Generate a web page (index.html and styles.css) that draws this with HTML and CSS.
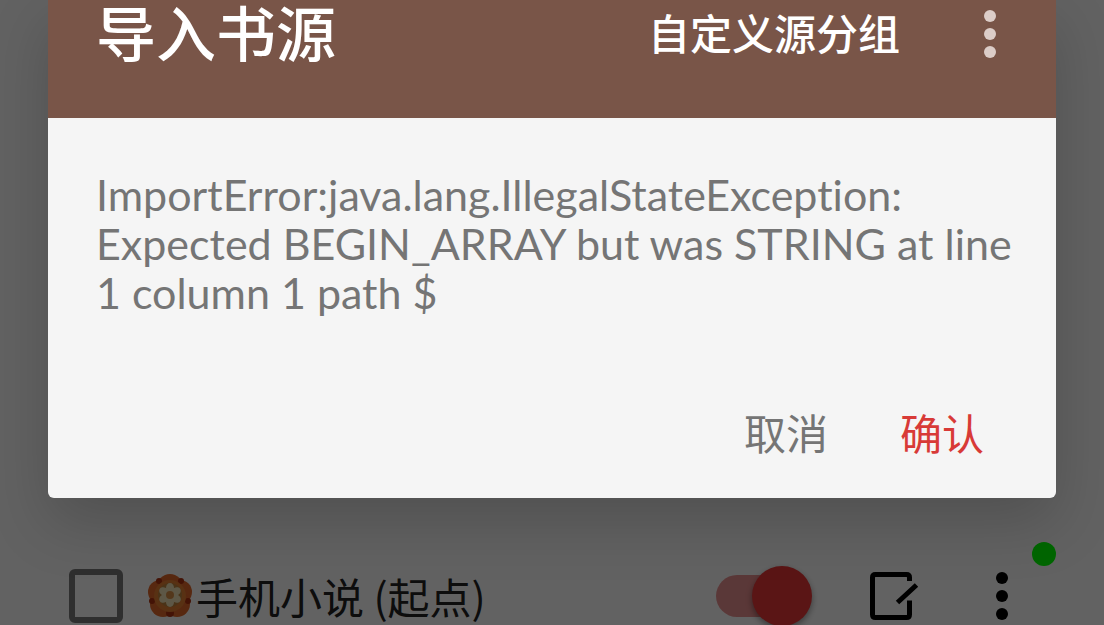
FILE: index.html
```html
<!DOCTYPE html>
<html lang="zh-CN">
<head>
<meta charset="utf-8">
<meta name="viewport" content="width=device-width, initial-scale=1">
<title>导入书源</title>
<link rel="stylesheet" href="styles.css">
</head>
<body>
<main class="page">
  <div class="source-row">
    <input class="check" type="checkbox" id="source">
    <label class="source-name" for="source">
      <svg class="flower" viewBox="0 0 46 46" aria-hidden="true">
        <g fill="#d9642a">
          <circle cx="23" cy="14" r="13"/><circle cx="33" cy="19" r="12"/><circle cx="30" cy="31" r="13"/><circle cx="16" cy="31" r="13"/><circle cx="13" cy="19" r="12"/>
        </g>
        <g fill="#a8300f">
          <circle cx="23" cy="40" r="4"/><circle cx="5" cy="28" r="3"/><circle cx="41" cy="28" r="3"/><circle cx="12" cy="8" r="3"/><circle cx="34" cy="8" r="3"/>
        </g>
        <circle cx="23" cy="23" r="16" fill="#dc7a30"/>
        <circle cx="23" cy="22" r="12" fill="#b8803c"/>
        <g fill="#e8d9b0">
          <ellipse cx="23" cy="15" rx="4" ry="5"/>
          <ellipse cx="23" cy="15" rx="4" ry="5" transform="rotate(60 23 22)"/>
          <ellipse cx="23" cy="15" rx="4" ry="5" transform="rotate(120 23 22)"/>
          <ellipse cx="23" cy="15" rx="4" ry="5" transform="rotate(180 23 22)"/>
          <ellipse cx="23" cy="15" rx="4" ry="5" transform="rotate(240 23 22)"/>
          <ellipse cx="23" cy="15" rx="4" ry="5" transform="rotate(300 23 22)"/>
        </g>
        <circle cx="23" cy="22" r="4" fill="#d08a45"/>
      </svg>
      <span>手机小说 (起点)</span>
    </label>
    <input class="switch" type="checkbox" role="switch" aria-label="启用" checked>
    <button class="icon-button edit" type="button" aria-label="编辑">
      <svg width="50" height="50" viewBox="0 0 50 50" fill="none" stroke="#000" stroke-width="5" aria-hidden="true">
        <path d="M40.500 10V6.500Q40.500 3.500 37.500 3.500H6.500Q3.500 3.500 3.500 6.500V43.500Q3.500 46.500 6.500 46.500H37.500Q40.500 46.500 40.500 43.500V29.500M28.500 31.500L47.500 14"/>
      </svg>
    </button>
    <button class="icon-button more" type="button" aria-label="更多">
      <svg width="12" height="48" viewBox="0 0 12 48" aria-hidden="true"><circle cx="6" cy="6" r="6"/><circle cx="6" cy="24" r="6"/><circle cx="6" cy="42" r="6"/></svg>
      <span class="status-dot"></span>
    </button>
  </div>
</main>
<div class="scrim">
  <section class="dialog" role="dialog" aria-modal="true" aria-labelledby="title">
    <header class="toolbar">
      <h1 class="title" id="title">导入书源</h1>
      <button class="group-button" type="button">自定义源分组</button>
      <button class="icon-button menu" type="button" aria-label="菜单">
        <svg width="12" height="48" viewBox="0 0 12 48" aria-hidden="true"><circle cx="6" cy="6" r="6"/><circle cx="6" cy="24" r="6"/><circle cx="6" cy="42" r="6"/></svg>
      </button>
    </header>
    <p class="message">ImportError:java.lang.IllegalStateException: Expected BEGIN_ARRAY but was STRING at line 1 column 1 path $</p>
    <footer class="actions">
      <button class="action" type="button">取消</button>
      <button class="action confirm" type="button">确认</button>
    </footer>
  </section>
</div>
</body>
</html>
```
FILE: styles.css
```css
* { box-sizing: border-box; }

body {
  margin: 0;
  overflow: hidden;
  background: #f5f5f5;
  font-family: Lato, "Noto Sans CJK SC", sans-serif;
  font-size: 42px;
}

button {
  padding: 0;
  border: 0;
  background: none;
  color: inherit;
  font: inherit;
}

.page {
  display: flex;
  flex-direction: column;
  justify-content: flex-end;
  height: 100vh;
}

.source-row {
  display: flex;
  align-items: center;
  height: 58px;
  padding: 0 84px 0 69px;
}

.check {
  appearance: none;
  flex: none;
  width: 54px;
  height: 54px;
  margin: 0 24px 0 0;
  border: 6px solid #757575;
  border-radius: 6px;
}

.source-name {
  display: flex;
  flex: 1;
  align-items: center;
  gap: 3px;
  color: #212121;
  line-height: 56px;
  white-space: nowrap;
  font-family: "Noto Sans CJK SC", sans-serif;
}

.flower {
  width: 46px;
  height: 46px;
}

.switch {
  appearance: none;
  display: flex;
  flex: none;
  align-items: center;
  justify-content: flex-end;
  width: 96px;
  height: 42px;
  margin: 0 57px 0 0;
  border-radius: 21px;
  background: linear-gradient(90deg, #e28c8c 0 72px, transparent 72px);
}

.switch::before {
  content: "";
  width: 60px;
  height: 60px;
  border-radius: 50%;
  background: #e03535;
  box-shadow: 0 3px 6px rgba(0, 0, 0, 0.4);
}

.icon-button {
  display: flex;
  flex: none;
  align-items: center;
  justify-content: center;
}

.more {
  position: relative;
  width: 36px;
  margin-left: 65px;
}

.status-dot {
  position: absolute;
  right: -36px;
  bottom: 54px;
  width: 24px;
  height: 24px;
  border-radius: 50%;
  background: #00ff00;
}

.scrim {
  position: absolute;
  inset: 0;
  padding: 0 48px;
  background: rgba(0, 0, 0, 0.6);
}

.dialog {
  overflow: hidden;
  border-radius: 0 0 6px 6px;
  background: #f5f5f5;
  box-shadow: 0 24px 60px rgba(0, 0, 0, 0.18);
}

.toolbar {
  display: flex;
  align-items: center;
  padding: 0 48px 50px;
  background: #795548;
  color: #fff;
  line-height: 68px;
}

.title {
  flex: 1;
  margin: 0;
  font-size: 60px;
  font-weight: 500;
}

.group-button {
  margin-right: 72px;
  font-weight: 500;
}

.menu {
  width: 36px;
  fill: #dccdc8;
}

.message {
  margin: 0;
  padding: 52px 36px 90px 48px;
  color: #757575;
  font-size: 43px;
  font-variant-ligatures: none;
  line-height: 49px;
}

.actions {
  display: flex;
  justify-content: flex-end;
  gap: 72px;
  padding: 0 72px 37px;
  color: #757575;
  line-height: 54px;
}

.confirm {
  color: #d83a37;
}
```
